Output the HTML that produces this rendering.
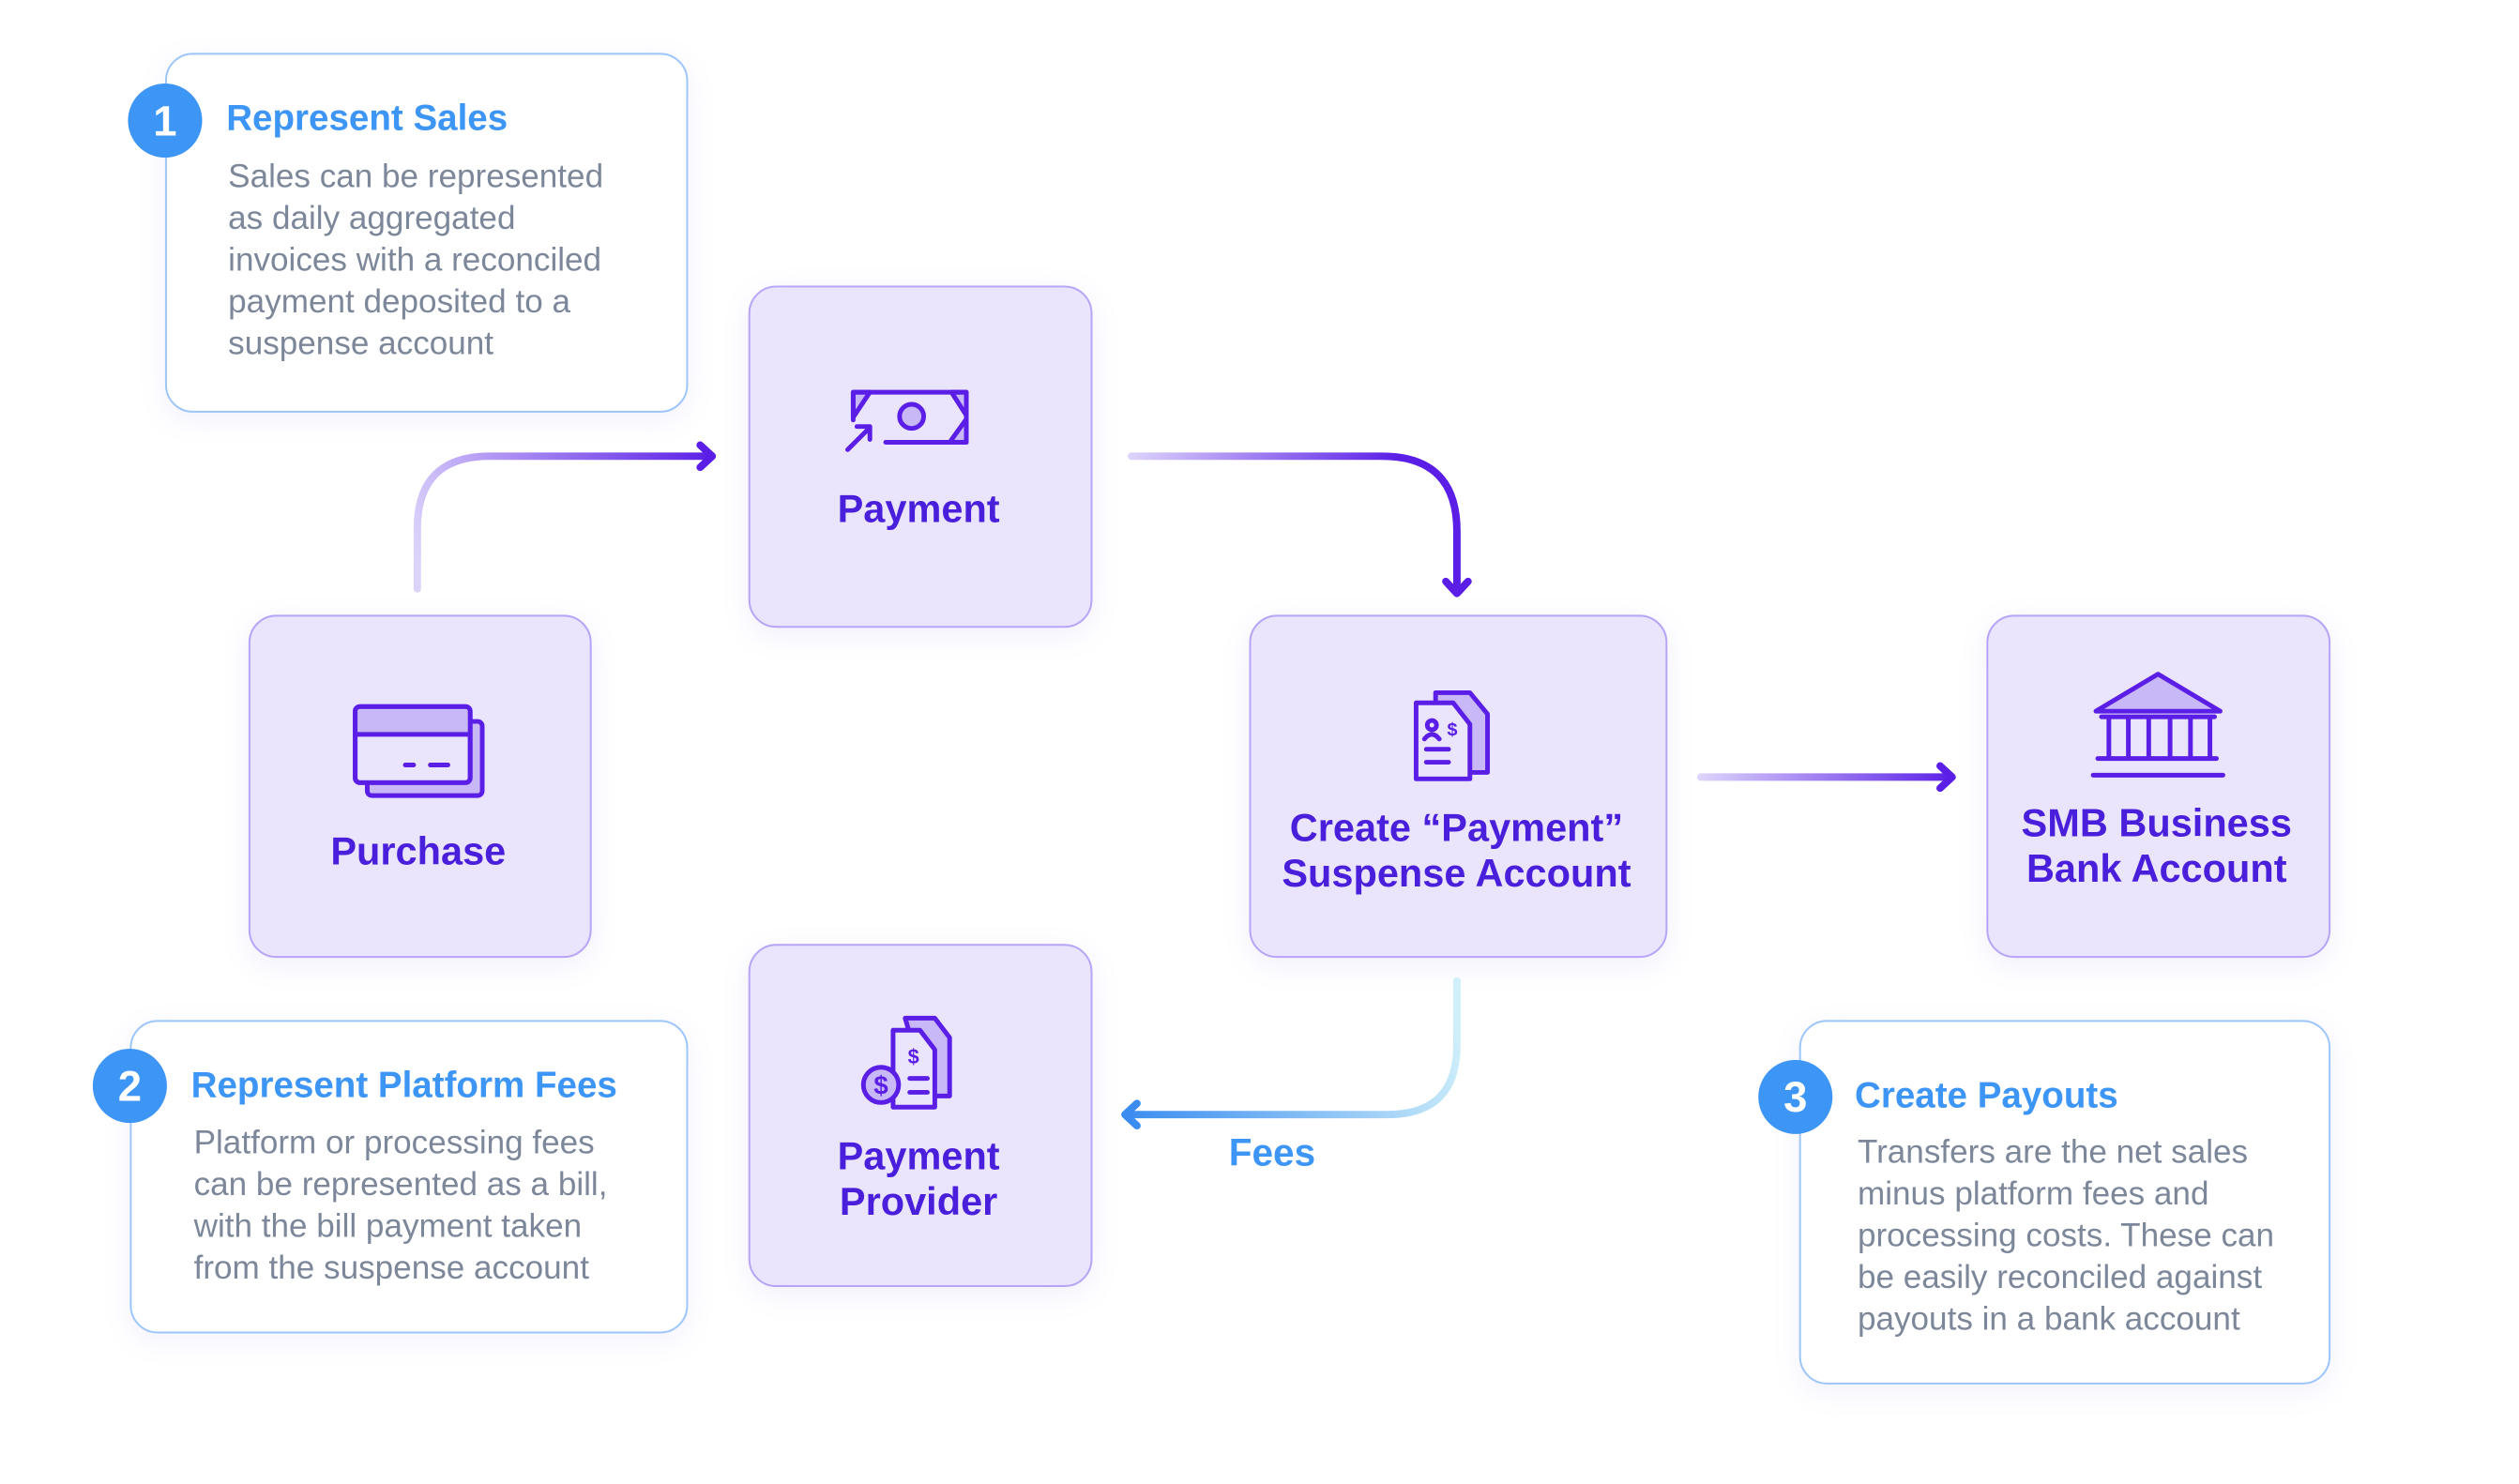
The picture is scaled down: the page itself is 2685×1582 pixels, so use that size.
<!DOCTYPE html>
<html><head><meta charset="utf-8"><style>
body{margin:0;width:2685px;height:1578px;background:#fff;position:relative;overflow:hidden;font-family:"Liberation Sans",sans-serif}
#w{position:absolute;left:0;top:0;width:2720px;height:1600px;transform:scale(0.9885);transform-origin:0 0}
.note{position:absolute;background:#fff;border:2px solid #9cc6fb;border-radius:30px;box-shadow:0 8px 30px rgba(140,120,240,0.10)}
.node{position:absolute;background:#ebe4fd;border:2px solid #b7a3f8;border-radius:30px;box-shadow:0 8px 30px rgba(140,120,240,0.12)}
.badge{position:absolute;width:80px;height:80px;border-radius:50%;background:#3d95f6;color:#fff;font-weight:bold;font-size:46px;text-align:center;line-height:80px}
.t{position:absolute;color:#3d95f6;font-weight:bold;font-size:39px;white-space:nowrap}
.b{position:absolute;color:#7c879a;font-size:35.5px;line-height:45px;white-space:nowrap}
.l{position:absolute;color:#4a1fdc;font-weight:bold;font-size:42px;line-height:49px;text-align:center;white-space:nowrap}
svg{position:absolute;left:0;top:0}
</style></head><body><div id="w">

<div class="note" style="left:178px;top:57px;width:560px;height:384px"></div>
<div class="note" style="left:140px;top:1100px;width:598px;height:334px"></div>
<div class="note" style="left:1940px;top:1100px;width:569px;height:389px"></div>

<div class="node" style="left:807px;top:308px;width:367px;height:365px"></div>
<div class="node" style="left:268px;top:663px;width:366px;height:366px"></div>
<div class="node" style="left:1347px;top:663px;width:447px;height:366px"></div>
<div class="node" style="left:2142px;top:663px;width:367px;height:366px"></div>
<div class="node" style="left:807px;top:1018px;width:367px;height:366px"></div>

<div class="badge" style="left:138px;top:90px">1</div>
<div class="t" style="left:244px;top:106px">Represent Sales</div>
<div class="b" style="left:246px;top:168px">Sales can be represented<br>as daily aggregated<br>invoices with a reconciled<br>payment deposited to a<br>suspense account</div>

<div class="badge" style="left:100px;top:1131px">2</div>
<div class="t" style="left:206px;top:1149px">Represent Platform Fees</div>
<div class="b" style="left:209px;top:1210px">Platform or processing fees<br>can be represented as a bill,<br>with the bill payment taken<br>from the suspense account</div>

<div class="badge" style="left:1896px;top:1143px">3</div>
<div class="t" style="left:2000px;top:1160px">Create Payouts</div>
<div class="b" style="left:2003px;top:1220px">Transfers are the net sales<br>minus platform fees and<br>processing costs. These can<br>be easily reconciled against<br>payouts in a bank account</div>

<div class="l" style="left:807px;width:367px;top:524px">Payment</div>
<div class="l" style="left:268px;width:366px;top:893px">Purchase</div>
<div class="l" style="left:1347px;width:447px;top:868px">Create “Payment”<br>Suspense Account</div>
<div class="l" style="left:2142px;width:367px;top:863px">SMB Business<br>Bank Account</div>
<div class="l" style="left:807px;width:367px;top:1222px">Payment<br>Provider</div>
<div class="t" style="left:1325px;top:1220px;font-size:41px">Fees</div>

<svg width="2720" height="1600" viewBox="0 0 2720 1600">
<defs>
<linearGradient id="g1" gradientUnits="userSpaceOnUse" x1="450" y1="600" x2="771" y2="492"><stop offset="0" stop-color="#dcd3fb"/><stop offset="1" stop-color="#5a1ee6"/></linearGradient>
<linearGradient id="g2" gradientUnits="userSpaceOnUse" x1="1218" y1="492" x2="1571" y2="640"><stop offset="0" stop-color="#ddd4fb"/><stop offset="0.7" stop-color="#5a1ee6"/></linearGradient>
<linearGradient id="g3" gradientUnits="userSpaceOnUse" x1="1832" y1="0" x2="2108" y2="0"><stop offset="0" stop-color="#ddd4fb"/><stop offset="1" stop-color="#5a1ee6"/></linearGradient>
<linearGradient id="g4" gradientUnits="userSpaceOnUse" x1="1571" y1="1100" x2="1212" y2="1202"><stop offset="0" stop-color="#cfeffa"/><stop offset="1" stop-color="#3a8cf0"/></linearGradient>
</defs>
<g fill="none" stroke-width="8" stroke-linecap="round" stroke-linejoin="round">
<path d="M450 635 V570 Q450 492 528 492 H767" stroke="url(#g1)"/>
<path d="M755 480 L768 492 L755 504" stroke="#5a1ee6"/>
<path d="M1220 492 H1490 Q1571 492 1571 573 V638" stroke="url(#g2)"/>
<path d="M1559 627 L1571 640 L1583 627" stroke="#5a1ee6"/>
<path d="M1834 838 H2104" stroke="url(#g3)"/>
<path d="M2092 826 L2105 838 L2092 850" stroke="#5a1ee6"/>
<path d="M1571 1058 V1127 Q1571 1202 1496 1202 H1214" stroke="url(#g4)"/>
<path d="M1226 1190 L1213 1202 L1226 1214" stroke="#3a8cf0"/>
</g>
<g fill="none" stroke="#5a1ee6" stroke-width="5" stroke-linejoin="round" stroke-linecap="round">
<path d="M920 423 L938 423 L920 450 Z M1042 423 L1026 423 L1042 448 Z M1042 477 L1024 477 L1042 452 Z" fill="#c9b8f7"/>
<path d="M920 453 V423 H1042 V477 H955"/>
<circle cx="983" cy="449" r="13" fill="#c9b8f7"/>
<path d="M914 485 L938 461 M924 460 H938 V474"/>
<rect x="396" y="778" width="124" height="80" rx="5" fill="#c9b8f7"/>
<rect x="383" y="762" width="124" height="82" rx="5" fill="#ebe4fd"/>
<path d="M385 765 H505 V790 H385 Z" fill="#c9b8f7" stroke="none"/>
<rect x="383" y="762" width="124" height="82" rx="5"/>
<path d="M383 792 H507 M437 825 H446 M464 825 H483"/>
<path d="M1548 747 H1585 L1604 770 V833 H1548 Z" fill="#c9b8f7"/>
<path d="M1527 758 H1567 L1585 781 V840 H1527 Z" fill="#ebe4fd"/>
<circle cx="1544" cy="782" r="5"/><path d="M1536 797 Q1544 787 1552 797"/>
<path d="M1538 808 H1562 M1538 822 H1562"/>
<path d="M2260 767 L2327 727 L2394 767 Z" fill="#c9b8f7"/>
<path d="M2266 773 H2388 M2274 773 V818 M2295 773 V818 M2317 773 V818 M2340 773 V818 M2362 773 V818 M2383 773 V818 M2262 818 H2390 M2257 836 H2397"/>
<path d="M976 1098 H1008 L1024 1119 V1182 H1001 Z" fill="#c9b8f7"/>
<path d="M963 1111 H992 L1008 1132 V1194 H963 Z" fill="#ebe4fd"/>
<path d="M981 1163 H1000 M981 1178 H1000"/>
<circle cx="950" cy="1170" r="19" fill="#c9b8f7"/>
</g>
<text x="950" y="1180" font-family="Liberation Sans" font-weight="bold" font-size="28" fill="#5a1ee6" text-anchor="middle">$</text>
<text x="985" y="1147" font-family="Liberation Sans" font-weight="bold" font-size="22" fill="#5a1ee6" text-anchor="middle">$</text>
<text x="1566" y="793" font-family="Liberation Sans" font-weight="bold" font-size="20" fill="#5a1ee6" text-anchor="middle">$</text>
</svg>
</div></body></html>
